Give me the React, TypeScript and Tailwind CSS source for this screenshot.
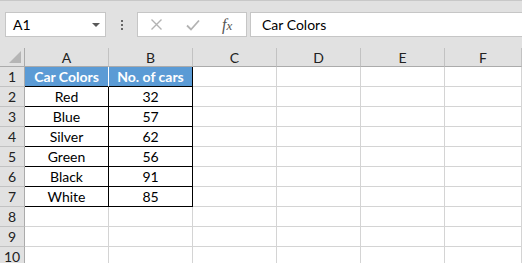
import * as React from "react";

const cols = ["A", "B", "C", "D", "E", "F"];

const data: [string, string][] = [
  ["Red", "32"],
  ["Blue", "57"],
  ["Silver", "62"],
  ["Green", "56"],
  ["Black", "91"],
  ["White", "85"],
];

const font = { fontFamily: "Lato, 'Open Sans', sans-serif" };

export default function App() {
  const rows = Array.from({ length: 10 }, (_, i) => i + 1);

  return (
    <div
      className="w-[522px] h-[263px] overflow-hidden bg-white text-[14px] text-black"
      style={font}
    >
      {/* Formula bar */}
      <div className="h-[48px] bg-[#e1e1e1] border-t border-[#c8c8c8] flex items-start pt-[11px] pl-[5px]">
        <div className="w-[101px] h-[25px] bg-white border border-[#c6c6c6] flex items-center justify-between pl-[7px] pr-[5px]">
          <span className="text-[14px]">A1</span>
          <span className="w-0 h-0 border-l-[4px] border-r-[4px] border-t-[4px] border-l-transparent border-r-transparent border-t-[#595959]" />
        </div>
        <div className="w-[31px] h-[25px] flex flex-col items-center justify-center gap-[2px]">
          <span className="w-[2px] h-[2px] bg-[#666]" />
          <span className="w-[2px] h-[2px] bg-[#666]" />
          <span className="w-[2px] h-[2px] bg-[#666]" />
        </div>
        <div className="w-[110px] h-[25px] bg-white border border-[#c6c6c6] flex items-center">
          <svg className="ml-[12px]" width="13" height="13" viewBox="0 0 13 13">
            <path d="M1.5 1.5l10 10M11.5 1.5l-10 10" stroke="#b3b3b3" strokeWidth="1.4" fill="none" />
          </svg>
          <svg className="ml-[23px]" width="14" height="12" viewBox="0 0 14 12">
            <path d="M1 6.5l4 4L13 1.5" stroke="#b3b3b3" strokeWidth="1.8" fill="none" />
          </svg>
          <span
            className="ml-[22px] italic text-[16px] leading-none text-[#555]"
            style={{ fontFamily: "'Liberation Serif', serif" }}
          >
            f<span className="text-[13px]">x</span>
          </span>
        </div>
        <div className="ml-[3px] flex-1 h-[25px] bg-white border-y border-l border-[#c6c6c6] flex items-center pl-[11px]">
          Car Colors
        </div>
      </div>

      {/* Grid */}
      <div className="grid grid-cols-[25px_84px_84px_84px_84px_84px_1fr] grid-rows-[19px_repeat(10,20px)]">
        {/* select-all corner */}
        <div className="bg-[#e1e1e1] border-r border-b border-[#ababab] flex items-end justify-end pr-[3px] pb-[3px]">
          <svg width="12" height="12" viewBox="0 0 12 12">
            <path d="M12 0V12H0Z" fill="#b5b5b5" />
          </svg>
        </div>
        {cols.map((c) => (
          <div
            key={c}
            className="bg-[#e1e1e1] border-r border-b border-r-[#c2c2c2] border-b-[#ababab] flex items-center justify-center text-[14px] text-[#222]"
          >
            {c}
          </div>
        ))}

        {rows.map((r) => {
          const d = r >= 2 && r <= 7 ? data[r - 2] : null;
          return (
            <React.Fragment key={r}>
              <div className="bg-[#e1e1e1] border-r border-b border-r-[#ababab] border-b-[#c2c2c2] flex items-center justify-center text-[14px] text-[#222]">
                {r}
              </div>
              {cols.map((c, ci) => {
                if (r === 1 && ci < 2) {
                  return (
                    <div
                      key={c}
                      className={`bg-[#5b9bd5] text-white font-bold flex items-center justify-center border-b border-black ${
                        ci === 0 ? "border-r border-r-[#ffffff]" : "border-r border-r-black"
                      }`}
                    >
                      {ci === 0 ? "Car Colors" : "No. of cars"}
                    </div>
                  );
                }
                if (d && ci < 2) {
                  return (
                    <div
                      key={c}
                      className="flex items-center justify-center border-r border-b border-black"
                    >
                      {d[ci]}
                    </div>
                  );
                }
                return (
                  <div key={c} className="border-r border-b border-[#d4d4d4]" />
                );
              })}
            </React.Fragment>
          );
        })}
      </div>
    </div>
  );
}
